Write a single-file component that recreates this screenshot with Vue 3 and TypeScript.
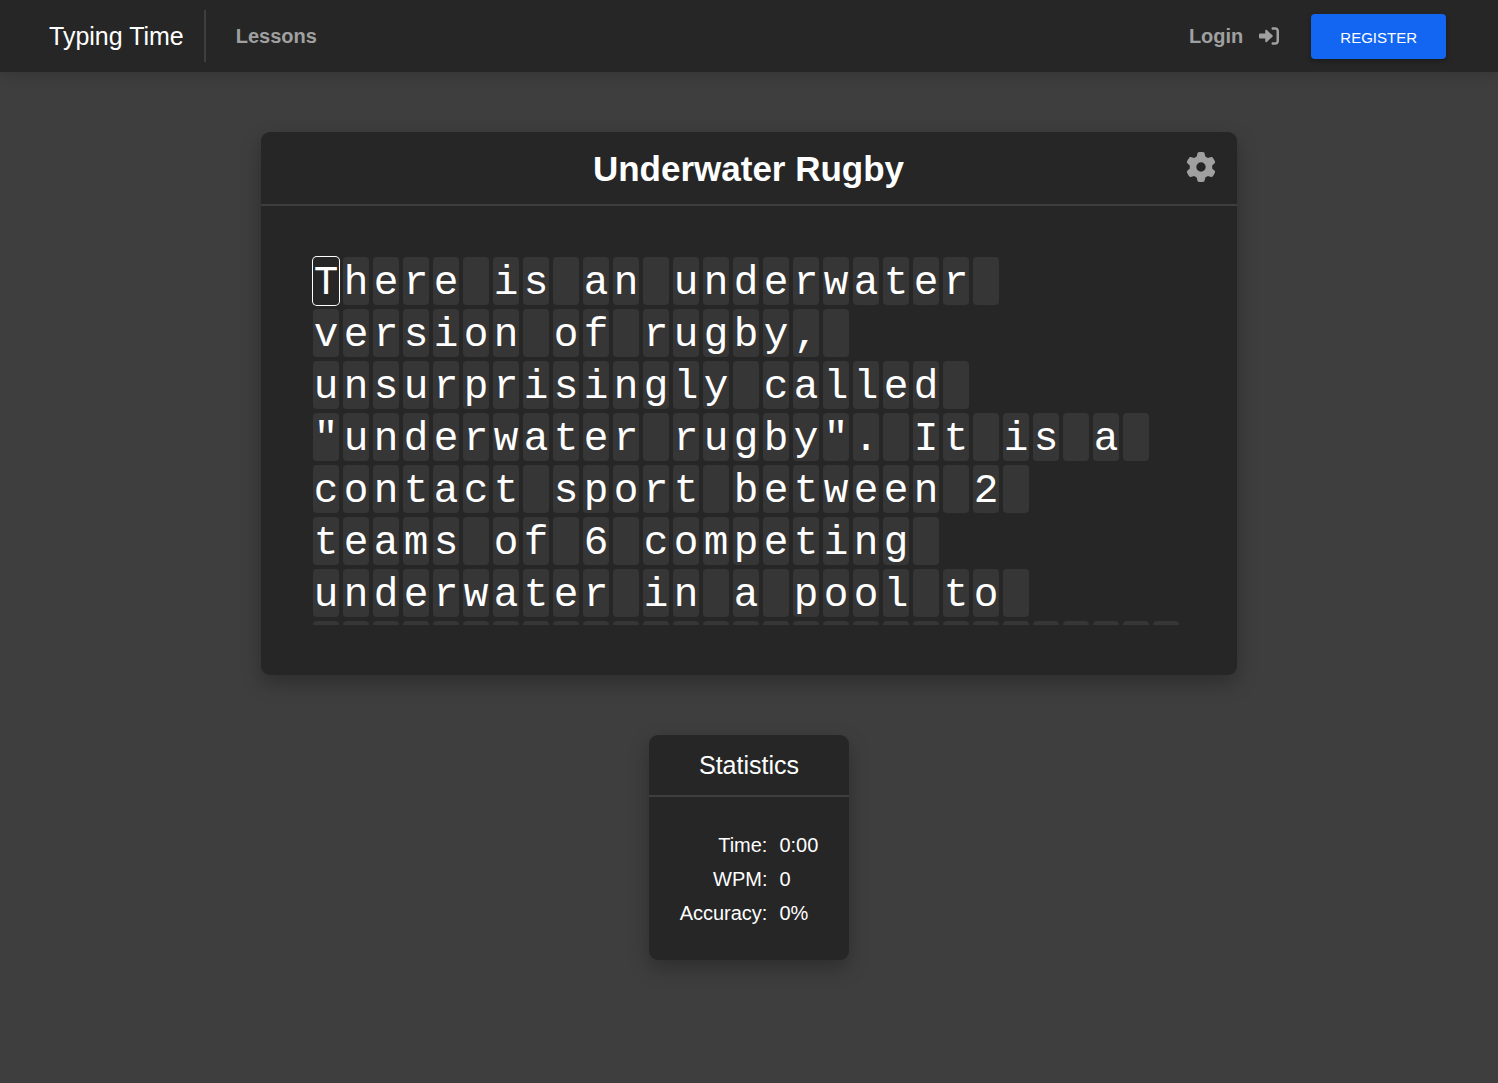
<script setup lang="ts">
import { ref } from 'vue'

interface Stat {
  label: string
  value: string
}

const title = 'Underwater Rugby'
const lesson =
  'There is an underwater version of rugby, unsurprisingly called "underwater rugby". It is a contact sport between 2 teams of 6 competing underwater in a pool to'

let offset = 0
const words = lesson.split(' ').map((word) => {
  const chars = [...word, '\u00a0'].map((char) => ({ char, index: offset++ }))
  return { start: chars[0].index, chars }
})

// Blank keys of the following line, which peeks in below the visible ones.
const upcoming = 29

const cursor = ref(0)

const stats = ref<Stat[]>([
  { label: 'Time:', value: '0:00' },
  { label: 'WPM:', value: '0' },
  { label: 'Accuracy:', value: '0%' },
])
</script>

<template>
  <div class="page">
    <header class="navbar">
      <a class="brand" href="#">Typing Time</a>
      <nav class="links">
        <a class="link" href="#lessons">Lessons</a>
      </nav>
      <div class="account">
        <a class="link login" href="#login">
          <span>Login</span>
          <svg class="login-icon" viewBox="0 0 512 512" aria-hidden="true">
            <path d="M344.7 238.5l-144.1-136C193.7 95.97 183.4 94.17 174.6 97.95C165.8 101.8 160.1 110.4 160.1 120V192H32.02C14.33 192 0 206.3 0 224v64c0 17.68 14.33 32 32.02 32h128.1v72c0 9.578 5.707 18.25 14.51 22.05c8.803 3.781 19.03 1.984 26-4.594l144.1-136C354.3 264.8 354.3 247.2 344.7 238.5zM416 32h-64c-17.67 0-32 14.33-32 32s14.33 32 32 32h64c17.67 0 32 14.33 32 32v256c0 17.67-14.33 32-32 32h-64c-17.67 0-32 14.33-32 32s14.33 32 32 32h64c53.02 0 96-42.98 96-96V128C512 74.98 469 32 416 32z" />
          </svg>
        </a>
        <button class="register" type="button">REGISTER</button>
      </div>
    </header>

    <main class="content">
      <section class="card lesson">
        <div class="lesson-head">
          <h1 class="lesson-title">{{ title }}</h1>
          <button class="settings" type="button" aria-label="Settings">
            <svg class="settings-icon" viewBox="0 0 512 512" aria-hidden="true">
              <path d="M495.9 166.6c3.2 8.7 .5 18.4-6.4 24.6l-43.3 39.4c1.1 8.3 1.7 16.8 1.7 25.4s-.6 17.1-1.7 25.4l43.3 39.4c6.9 6.2 9.6 15.9 6.4 24.6c-4.4 11.9-9.7 23.3-15.8 34.3l-4.7 8.1c-6.6 11-14 21.4-22.1 31.2c-5.9 7.2-15.7 9.6-24.5 6.8l-55.7-17.7c-13.4 10.3-28.2 18.9-44 25.4l-12.5 57.1c-2 9.1-9 16.3-18.2 17.8c-13.8 2.3-28 3.5-42.5 3.5s-28.7-1.2-42.5-3.5c-9.2-1.5-16.2-8.7-18.2-17.8l-12.5-57.1c-15.8-6.5-30.6-15.1-44-25.4L83.1 425.9c-8.8 2.8-18.6 .3-24.5-6.8c-8.1-9.8-15.5-20.2-22.1-31.2l-4.7-8.1c-6.1-11-11.4-22.4-15.8-34.3c-3.2-8.7-.5-18.4 6.4-24.6l43.3-39.4C64.6 273.1 64 264.6 64 256s.6-17.1 1.7-25.4L22.4 191.2c-6.9-6.2-9.6-15.9-6.4-24.6c4.4-11.9 9.7-23.3 15.8-34.3l4.7-8.1c6.6-11 14-21.4 22.1-31.2c5.9-7.2 15.7-9.6 24.5-6.8l55.7 17.7c13.4-10.3 28.2-18.9 44-25.4l12.5-57.1c2-9.1 9-16.3 18.2-17.8C227.3 1.2 241.5 0 256 0s28.7 1.2 42.5 3.5c9.2 1.5 16.2 8.7 18.2 17.8l12.5 57.1c15.8 6.5 30.6 15.1 44 25.4l55.7-17.7c8.8-2.8 18.6-.3 24.5 6.8c8.1 9.8 15.5 20.2 22.1 31.2l4.7 8.1c6.1 11 11.4 22.4 15.8 34.3zM256 336a80 80 0 1 0 0-160 80 80 0 1 0 0 160z" />
            </svg>
          </button>
        </div>
        <div class="lesson-body">
          <div class="text">
            <span v-for="word in words" :key="word.start" class="word">
              <span
                v-for="item in word.chars"
                :key="item.index"
                class="char"
                :class="{ current: item.index === cursor }"
              >{{ item.char }}</span>
            </span>
            <span class="word">
              <span v-for="n in upcoming" :key="n" class="char"></span>
            </span>
          </div>
        </div>
      </section>

      <section class="card statistics">
        <h2 class="stats-title">Statistics</h2>
        <table class="stats">
          <tbody>
            <tr v-for="stat in stats" :key="stat.label">
              <th scope="row">{{ stat.label }}</th>
              <td>{{ stat.value }}</td>
            </tr>
          </tbody>
        </table>
      </section>
    </main>
  </div>
</template>

<style>
body {
  background: #3e3e3e;
}
</style>

<style scoped>
.page {
  min-height: 100vh;
  color: #ffffff;
  font-family: Arial, 'Liberation Sans', sans-serif;
  font-size: 20px;
}

.navbar {
  display: flex;
  align-items: center;
  box-sizing: border-box;
  height: 72px;
  padding: 0 52px 0 49px;
  background: #262626;
  box-shadow: 0 4px 12px rgba(0, 0, 0, 0.12);
}

.brand {
  padding-right: 20px;
  border-right: 2px solid #3e3e3e;
  color: #ffffff;
  font-size: 25px;
  line-height: 52px;
  text-decoration: none;
}

.links {
  flex: 1;
  padding-left: 30px;
}

.link {
  color: #a0a0a0;
  font-weight: 700;
  text-decoration: none;
}

.account {
  display: flex;
  align-items: center;
  gap: 32px;
}

.login {
  display: flex;
  align-items: center;
  gap: 16px;
}

.login-icon {
  width: 20px;
  height: 20px;
  fill: currentColor;
}

.register {
  height: 45px;
  padding: 2px 29px 0;
  border: 0;
  border-radius: 4px;
  background: #1266f1;
  box-shadow: 0 2px 5px rgba(0, 0, 0, 0.3);
  color: #ffffff;
  font-family: inherit;
  font-size: 15px;
}

.content {
  display: flex;
  flex-direction: column;
  align-items: center;
  gap: 60px;
  padding: 60px 0;
}

.card {
  border-radius: 9px;
  background: #262626;
  box-shadow: 0 8px 20px rgba(0, 0, 0, 0.26);
}

.lesson {
  width: min(976px, 94%);
}

.lesson-head {
  display: grid;
  grid-template-columns: 30px 1fr 30px;
  align-items: center;
  height: 72px;
  padding: 0 21px 0 20px;
  border-bottom: 2px solid #3e3e3e;
}

.lesson-title {
  grid-column: 2;
  margin: 0;
  padding-top: 2px;
  font-size: 35px;
  line-height: 40px;
  text-align: center;
}

.settings {
  display: flex;
  padding: 0 0 2px;
  border: 0;
  background: none;
  color: #a0a0a0;
}

.settings-icon {
  width: 30px;
  height: 30px;
  fill: currentColor;
}

.lesson-body {
  padding: 50px;
}

.text {
  display: flex;
  flex-wrap: wrap;
  align-content: flex-start;
  height: 369px;
  overflow: hidden;
}

.word {
  display: flex;
}

.char {
  width: 26px;
  height: 48px;
  margin: 1px 2px 3px;
  border-radius: 4px;
  background: #363636;
  font-family: 'Courier New', 'Liberation Mono', monospace;
  font-size: 41px;
  line-height: 52px;
  text-align: center;
}

.current {
  background: #262626;
  box-shadow: 0 0 0 1px #ffffff;
}

.stats-title {
  margin: 0;
  border-bottom: 2px solid #3e3e3e;
  font-size: 25px;
  font-weight: 400;
  line-height: 60px;
  text-align: center;
}

.stats {
  padding: 31px 31px 30px;
  border-spacing: 0;
  line-height: 34px;
}

.stats th {
  padding: 0 12px 0 0;
  font-weight: 400;
  text-align: right;
}

.stats td {
  padding: 0;
}
</style>
